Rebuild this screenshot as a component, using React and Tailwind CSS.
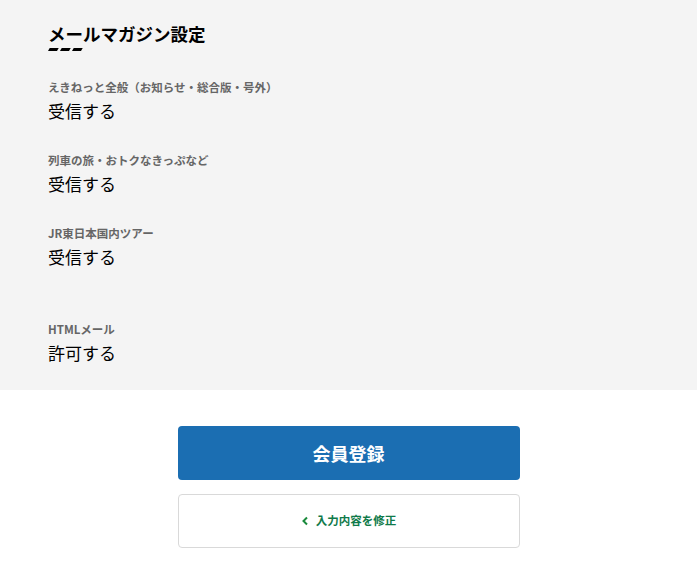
const ITEMS = [
    { label: 'えきねっと全般（お知らせ・総合版・号外）', value: '受信する' },
    { label: '列車の旅・おトクなきっぷなど', value: '受信する' },
    { label: 'JR東日本国内ツアー', value: '受信する' },
];

function Field({ label, value, className = '' }) {
    return (
        <div className={className}>
            <div className="text-[11.5px] leading-[16px] font-bold text-[#666]">{label}</div>
            <div className="mt-[5px] text-[17px] leading-[21px] text-black">{value}</div>
        </div>
    );
}

export default function App() {
    return (
        <div
            className="w-[697px] min-h-[587px] bg-white"
            style={{ fontFamily: '"Noto Sans CJK JP", "Noto Sans", sans-serif' }}
        >
            {/* Settings panel */}
            <section className="bg-[#f4f4f4] pl-[48px] pt-[23px] h-[390px]">
                <h2 className="text-[17.5px] leading-[22px] font-bold text-black">メールマガジン設定</h2>
                <div className="flex gap-[3px] mt-[3px] ml-[1px]">
                    <span className="block w-[9px] h-[2.5px] bg-black -skew-x-[30deg]" />
                    <span className="block w-[9px] h-[2.5px] bg-black -skew-x-[30deg]" />
                    <span className="block w-[9px] h-[2.5px] bg-black -skew-x-[30deg]" />
                </div>

                <div className="mt-[28px] flex flex-col gap-[31px]">
                    {ITEMS.map((item, i) => (
                        <Field key={i} label={item.label} value={item.value} />
                    ))}
                </div>
                <Field className="mt-[54px]" label="HTMLメール" value="許可する" />
            </section>

            {/* Actions */}
            <div className="flex flex-col items-center pt-[36px] gap-[14px]">
                <button className="w-[342px] h-[54px] rounded-[4px] bg-[#1b6eb2] text-white text-[18px] font-bold">
                    会員登録
                </button>
                <button className="w-[342px] h-[54px] rounded-[4px] bg-white border border-[#d9d9d9] flex items-center justify-center gap-[7px] text-[#0f7a4a] text-[11.5px] font-bold">
                    <svg width="8" height="10" viewBox="0 0 8 10" fill="none">
                        <path d="M6 1.5L2.5 5L6 8.5" stroke="#1a8a3c" strokeWidth="2" />
                    </svg>
                    入力内容を修正
                </button>
            </div>
        </div>
    );
}
